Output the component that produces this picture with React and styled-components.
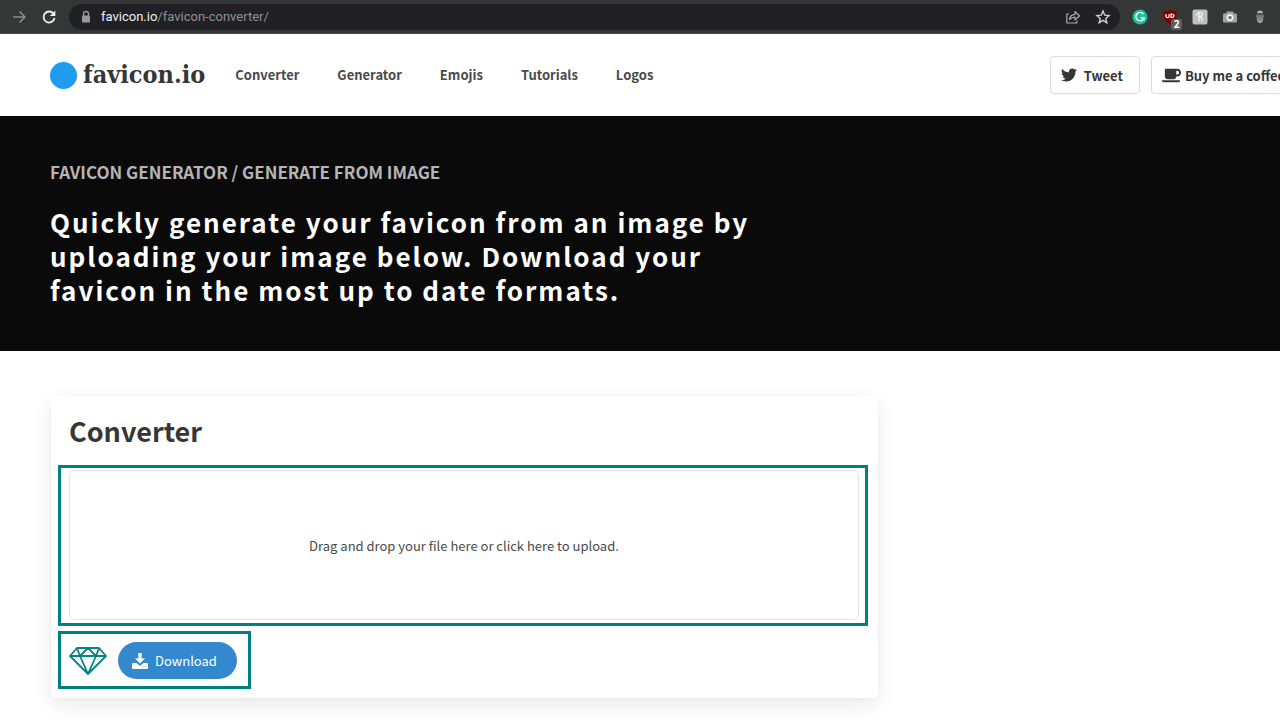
import React from "react";
import styled, { createGlobalStyle } from "styled-components";
import { FaTwitter, FaCoffee } from "react-icons/fa";

const sans = `"Noto Sans CJK JP", "Open Sans", sans-serif`;

const GlobalStyle = createGlobalStyle`
  * { box-sizing: border-box; }
  body { margin: 0; background: #fff; color: #363636; font-family: ${sans}; font-size: 13px; overflow-x: hidden; }
  a { color: inherit; text-decoration: none; }
  button { font: inherit; cursor: pointer; }
  h1, h2, p { margin: 0; }
  svg { display: block; flex: none; }
`;

const Page = styled.div`
  overflow: hidden;
`;

const BrowserBar = styled.header`
  display: flex;
  align-items: center;
  height: 34px;
  padding: 0 12px 0 11px;
  background: #353736;
  border-bottom: 1px solid #484a49;
`;

const IconButton = styled.button`
  display: grid;
  place-items: center;
  width: 16px;
  height: 16px;
  padding: 0;
  border: 0;
  background: none;
  color: ${(p) => p.$tone || "#d6d6d6"};
  margin-left: ${(p) => p.$gap || 0}px;
`;

const Address = styled.div`
  flex: 1;
  display: flex;
  align-items: center;
  height: 26px;
  margin: 0 12px;
  padding: 0 9px 0 11px;
  border-radius: 13px;
  background: #202025;
`;

const UrlText = styled.a`
  flex: 1;
  margin-left: 9px;
  color: #8f9093;
  font: 13px/18px Roboto, sans-serif;
`;

const Host = styled.span`
  color: #eeeeef;
`;

const Extensions = styled.div`
  display: flex;
  align-items: center;
  gap: 14px;
`;

const Extension = styled.button`
  position: relative;
  display: grid;
  place-items: center;
  width: 16px;
  height: 16px;
  padding: 0;
  border: 0;
  background: none;
`;

const Badge = styled.span`
  position: absolute;
  left: 9px;
  top: 10px;
  width: 11px;
  height: 11px;
  border-radius: 2px;
  background: #5d5f61;
  color: #fff;
  font: bold 10px/11px "Open Sans", sans-serif;
  text-align: center;
`;

const Navbar = styled.nav`
  display: flex;
  align-items: center;
  height: 82px;
  padding-left: 50px;
`;

const Logo = styled.a`
  display: flex;
  align-items: center;
  gap: 6px;
  margin-right: 30px;
  color: #363636;
  font: bold 25px/32px "DejaVu Serif Condensed", "DejaVu Serif", serif;
`;

const Dot = styled.span`
  width: 27px;
  height: 27px;
  border-radius: 50%;
  background: #209cee;
`;

const Links = styled.div`
  flex: 1;
  display: flex;
  gap: 38px;
  font-weight: 700;
  color: #4a4a4a;
  line-height: 20px;
`;

const Actions = styled.div`
  display: flex;
  gap: 11px;
  margin-right: -22px;
`;

const Action = styled.a`
  display: flex;
  align-items: center;
  gap: ${(p) => p.$gap}px;
  height: 38px;
  padding: 0 16px 0 10px;
  border: 1px solid #dbdbdb;
  border-radius: 4px;
  font-weight: 700;
  white-space: nowrap;
`;

const Hero = styled.section`
  padding: 43px 50px 44px;
  background: #0a0a0a;
`;

const Crumb = styled.p`
  margin-bottom: 21px;
  color: #b5b5b5;
  font-size: 17px;
  font-weight: 700;
  line-height: 25px;
  text-transform: uppercase;
`;

const Lead = styled.h1`
  max-width: 720px;
  color: #fff;
  font-size: 26px;
  font-weight: 700;
  line-height: 34px;
  letter-spacing: 2px;
`;

const Main = styled.main`
  padding: 45px 51px 24px;
`;

const Card = styled.section`
  max-width: 827px;
  padding: 16px 10px 9px 7px;
  border-radius: 5px;
  box-shadow: 0 7px 20px rgba(10, 10, 10, 0.09), 0 0 0 1px rgba(10, 10, 10, 0.01);
`;

const CardTitle = styled.h2`
  margin: 0 0 16px 11px;
  font-size: 27px;
  font-weight: 700;
  line-height: 37px;
`;

const Highlight = styled.div`
  border: 3px solid #008080;
  padding: ${(p) => p.$pad};
`;

const DropZone = styled.button`
  display: block;
  width: 100%;
  height: 150px;
  border: 1px solid #e2e2e2;
  border-radius: 5px;
  background: #fff;
  color: #4a4a4a;
`;

const DownloadRow = styled(Highlight)`
  display: inline-flex;
  align-items: center;
  gap: 11px;
  margin-top: 5px;
  vertical-align: top;
`;

const Download = styled.button`
  display: flex;
  align-items: center;
  gap: 7px;
  height: 37px;
  padding: 0 20px 0 14px;
  border: 0;
  border-radius: 19px;
  background: #3488ce;
  color: #fff;
`;

const links = ["Converter", "Generator", "Emojis", "Tutorials", "Logos"];

export default function App() {
  return (
    <Page>
      <GlobalStyle />
      <BrowserBar>
        <IconButton $tone="#8b8c8c" aria-label="Forward">
          <svg width="16" height="16" viewBox="0 0 16 16" fill="none" stroke="currentColor" strokeWidth="1.5"><path d="M2 8h11.5M8.5 2.5L14 8l-5.500 5.500" /></svg>
        </IconButton>
        <IconButton $gap={14} $tone="#f0f0f0" aria-label="Reload">
          <svg width="16" height="16" viewBox="0 0 16 16" fill="none" stroke="currentColor" strokeWidth="1.800"><path d="M12.700 5A5.500 5.500 0 1 0 13.500 9" /><path d="M14.300 1.500v5.500H8.800z" fill="currentColor" stroke="none" /></svg>
        </IconButton>
        <Address>
          <svg width="12" height="14" viewBox="0 0 12 14"><path d="M3.500 6V4a2.500 2.500 0 0 1 5 0v2" fill="none" stroke="#97989b" strokeWidth="1.400" /><rect x="2" y="5.500" width="8" height="7" rx="1" fill="#97989b" /></svg>
          <UrlText href="#"><Host>favicon.io</Host>/favicon-converter/</UrlText>
          <IconButton $tone="#a9aaac" aria-label="Share">
            <svg width="16" height="16" viewBox="0 0 16 16" fill="none" stroke="currentColor" strokeWidth="1.200"><path d="M4 5H1.800v9h10v-2.500" /><path d="M4.500 10.500c.4-3.500 2.300-5 5.500-5.200V2.500L14.500 7 10 10.800V8.200c-2.500 0-4 .6-5.500 2.300z" strokeLinejoin="round" /></svg>
          </IconButton>
          <IconButton $gap={14} $tone="#d0d0d2" aria-label="Bookmark">
            <svg width="16" height="16" viewBox="0 0 16 16" fill="none" stroke="currentColor" strokeWidth="1.400"><path d="M8 2l1.700 4.100 4.400.4-3.300 2.900 1 4.300L8 11.400l-3.800 2.300 1-4.300L1.900 6.500l4.400-.4z" /></svg>
          </IconButton>
        </Address>
        <Extensions>
          <Extension aria-label="Grammar checker">
            <svg width="16" height="16" viewBox="0 0 16 16" fill="none"><circle cx="8" cy="8" r="7.500" fill="#15c39a" /><path d="M11.500 5.200A4.200 4.200 0 1 0 12 9H8.800M12 9l-.2 2.500" stroke="#fff" strokeWidth="1.400" /></svg>
          </Extension>
          <Extension aria-label="Ad blocker, 2 blocked">
            <svg width="16" height="16" viewBox="0 0 16 16" fill="none"><path d="M8 .5c2 1.300 4 1.800 6.800 1.800 0 6-.8 10-6.800 13.200C2 12.300 1.200 8.300 1.200 2.300 4 2.300 6 1.800 8 .5z" fill="#800000" /><path d="M4 5v2.500q0 1.200 1.500 1.200T7 7.500V5M9 5v3.500h1q2 0 2-1.700T10 5H8.500" stroke="#fff" strokeWidth="1.200" /></svg>
            <Badge>2</Badge>
          </Extension>
          <Extension aria-label="Coupons">
            <svg width="16" height="16" viewBox="0 0 16 16" fill="none"><rect x=".5" y=".5" width="15" height="15" rx="2" fill="#c0c0c0" /><path d="M7 3v9.500M7 8q3-.2 3 2v2.500M4.500 6.500Q5 4 7 3.500h1.500q2 0 1.800 1.800T7 8" stroke="#f6f6f6" strokeWidth="1.200" /></svg>
          </Extension>
          <Extension aria-label="Screenshot">
            <svg width="16" height="16" viewBox="0 0 16 16"><path d="M5 2.500h6l1 2h2q1 0 1 1v7q0 1-1 1H2q-1 0-1-1v-7q0-1 1-1h2z" fill="#a3a3a3" /><circle cx="8" cy="8.600" r="2.600" fill="#777" stroke="#fff" strokeWidth="1.500" /></svg>
          </Extension>
          <Extension aria-label="Incognito helper">
            <svg width="16" height="16" viewBox="0 0 16 16">
              <defs><linearGradient id="body" x1="0" y1="0" x2="0" y2="1"><stop offset="0" stopColor="#6f6f6f" /><stop offset="1" stopColor="#a2a2a2" /></linearGradient></defs>
              <path d="M5 4.300Q5 1.500 8 1.500t3 2.800z" fill="#b0b0b0" />
              <path d="M4.300 5.500h7.400q.8 2-.5 3.500.4 5-3.200 5.200Q4.400 14 4.800 9 3.500 7.500 4.300 5.500z" fill="url(#body)" />
            </svg>
          </Extension>
        </Extensions>
      </BrowserBar>

      <Navbar>
        <Logo href="#"><Dot />favicon.io</Logo>
        <Links>{links.map((l) => <a href="#" key={l}>{l}</a>)}</Links>
        <Actions>
          <Action href="#" $gap={7}><FaTwitter size={16} />Tweet</Action>
          <Action href="#" $gap={4}><FaCoffee size={19} />Buy me a coffee</Action>
        </Actions>
      </Navbar>

      <Hero>
        <Crumb>Favicon Generator / Generate from Image</Crumb>
        <Lead>Quickly generate your favicon from an image by uploading your image below. Download your favicon in the most up to date formats.</Lead>
      </Hero>

      <Main>
        <Card>
          <CardTitle>Converter</CardTitle>
          <Highlight $pad="2px 6px 3px 8px">
            <DropZone>Drag and drop your file here or click here to upload.</DropZone>
          </Highlight>
          <DownloadRow $pad="8px 11px 7px 8px">
            <svg width="38" height="30" viewBox="0 0 38 30" fill="none" stroke="#078484" strokeWidth="1.800" strokeLinejoin="round"><path d="M8 2h22l7 8-18 18L1 10zM1 10h36M8 2l3 8 8 18 8-18 3-8M11 10l8-8 8 8" /></svg>
            <Download>
              <svg width="16" height="16" viewBox="0 0 16 16" fill="#fff"><path d="M6.300 0h3.400v5.500h3.300L8 10.500 3 5.500h3.300z" /><path fillRule="evenodd" d="M1 10h3.500L8 13l3.500-3H15q1 0 1 1v4q0 1-1 1H1q-1 0-1-1v-4q0-1 1-1zm9.500 3.500v1h1v-1zm2.500 0v1h1v-1z" /></svg>
              Download
            </Download>
          </DownloadRow>
        </Card>
      </Main>
    </Page>
  );
}
